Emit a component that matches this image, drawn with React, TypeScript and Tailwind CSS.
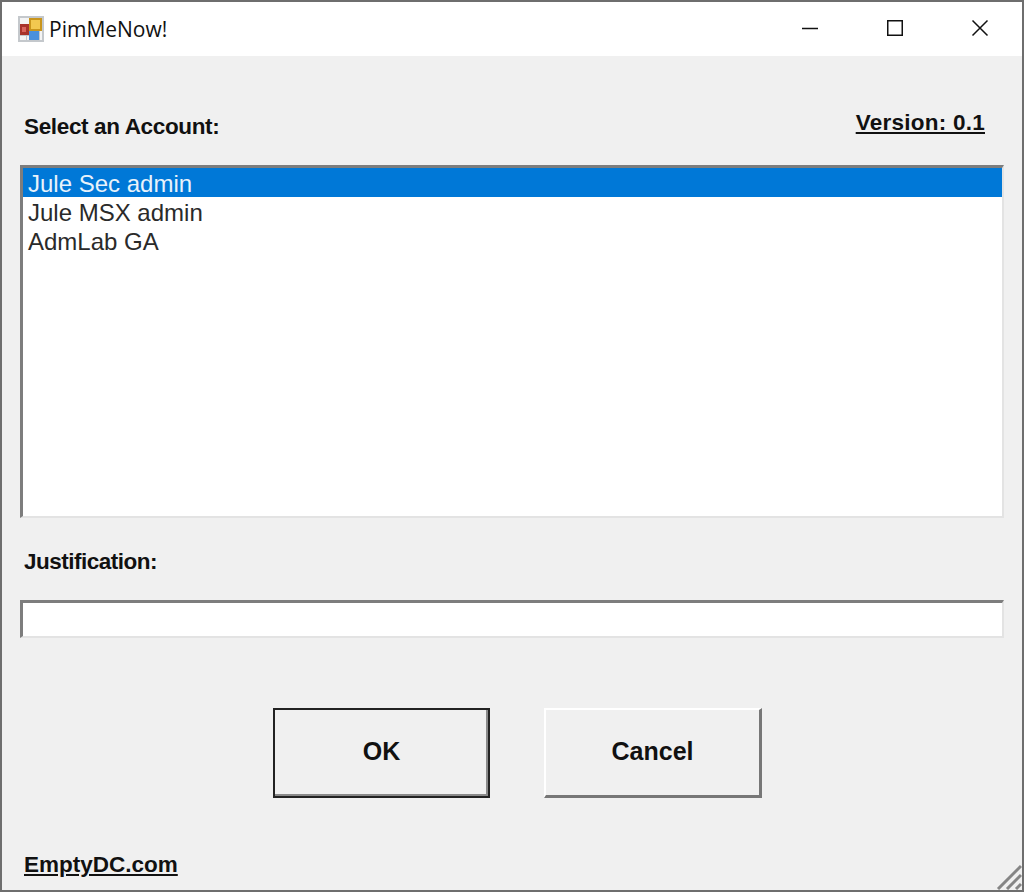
const accounts = ['Jule Sec admin', 'Jule MSX admin', 'AdmLab GA'];

function AppIcon() {
  return (
    <svg width="26" height="26" viewBox="0 0 26 26" className="shrink-0">
      <rect x="0" y="0" width="26" height="26" fill="#c4c8cc" />
      <rect x="2" y="2" width="22" height="22" fill="#f4f4f4" />
      <rect x="2" y="8" width="9" height="11" fill="#a8322a" />
      <rect x="4" y="11" width="4" height="5" fill="#d9645c" />
      <rect x="11" y="2" width="13" height="13" fill="#c9951c" />
      <rect x="13" y="4" width="9" height="9" fill="#f2c850" />
      <rect x="11" y="15" width="10" height="9" fill="#4a90dc" />
      <rect x="2" y="19" width="9" height="1" fill="#c4c8cc" />
      <rect x="8" y="20" width="1" height="4" fill="#c4c8cc" />
      <rect x="21" y="15" width="1" height="9" fill="#c4c8cc" />
    </svg>
  );
}

export default function App() {
  return (
    <div className="w-[1024px] h-[892px] relative flex flex-col border-2 border-[#6e6e6e] bg-[#f0f0f0] font-['Liberation_Sans',Arial,sans-serif] text-[#111111] overflow-hidden">
      {/* title bar */}
      <div className="h-[54px] bg-white flex items-center shrink-0 pl-4">
        <AppIcon />
        <span className="ml-[5px] pt-[2px] text-[21px] text-[#111111] font-['Open_Sans','Noto_Sans',sans-serif]">PimMeNow!</span>
        <div className="ml-auto flex items-center pr-[33px] pb-[3px] text-[#111111]">
          <svg width="18" height="18" viewBox="0 0 18 18"><path d="M1 9.5h16" stroke="currentColor" strokeWidth="1.5" /></svg>
          <svg width="18" height="18" viewBox="0 0 18 18" className="ml-[67px]"><rect x="1.75" y="1.75" width="14.5" height="14.5" fill="none" stroke="currentColor" strokeWidth="1.5" /></svg>
          <svg width="18" height="18" viewBox="0 0 18 18" className="ml-[67px]"><path d="M1.5 1.5l15 15M16.5 1.5l-15 15" stroke="currentColor" strokeWidth="1.5" /></svg>
        </div>
      </div>

      <div className="flex-1 flex flex-col px-[18px]">
        <div className="h-[109px] shrink-0 flex justify-between pl-1 pr-[19px] font-bold text-[22.5px]">
          <span className="mt-[57px] h-[28px] leading-[28px] tracking-[-0.35px]">Select an Account:</span>
          <span className="mt-[53px] h-[28px] leading-[28px] underline tracking-[0.25px]">Version: 0.1</span>
        </div>

        <div className="h-[353px] shrink-0 bg-white border-t-[3px] border-l-[3px] border-r-2 border-b-2 border-t-[#7d7d7d] border-l-[#7d7d7d] border-r-[#e3e3e3] border-b-[#e3e3e3] text-[24px]">
          {accounts.map((name, i) => (
            <div key={name} className={i === 0 ? 'h-[29px] leading-[31px] pl-[5px] bg-[#0078d7] text-[#e8f2fb]' : 'h-[29px] leading-[31px] pl-[5px] text-[#2a2a2a]'}>
              {name}
            </div>
          ))}
        </div>

        <div className="h-[82px] shrink-0 pl-1 font-bold text-[22.5px] tracking-[-0.5px]">
          <div className="mt-[30px] h-[28px] leading-[28px]">Justification:</div>
        </div>

        <div className="h-[38px] shrink-0 bg-white border-t-[3px] border-l-[3px] border-r-2 border-b-2 border-t-[#7d7d7d] border-l-[#7d7d7d] border-r-[#e3e3e3] border-b-[#e3e3e3]" />

        <div className="mt-[70px] flex gap-[54px] pl-[253px] font-bold text-[25px]">
          <button className="w-[217px] h-[90px] pb-[2px] bg-[#f0f0f0] border-2 border-[#222222] shadow-[inset_-2px_-2px_0_#8a8a8a]">OK</button>
          <button className="w-[218px] h-[90px] pb-[2px] bg-[#f0f0f0] border-t-2 border-l-2 border-r-[3px] border-b-[3px] border-t-white border-l-white border-r-[#777777] border-b-[#777777]">Cancel</button>
        </div>

        <div className="mt-[53px] pl-1 font-bold text-[22.5px] leading-[28px] underline">EmptyDC.com</div>
      </div>

      {/* resize grip */}
      <svg width="26" height="26" viewBox="0 0 26 26" className="absolute right-0 bottom-0">
        <path d="M2 25L25 2M11 25L25 11M20 25l5-5" stroke="#858585" strokeWidth="3" />
      </svg>
    </div>
  );
}
